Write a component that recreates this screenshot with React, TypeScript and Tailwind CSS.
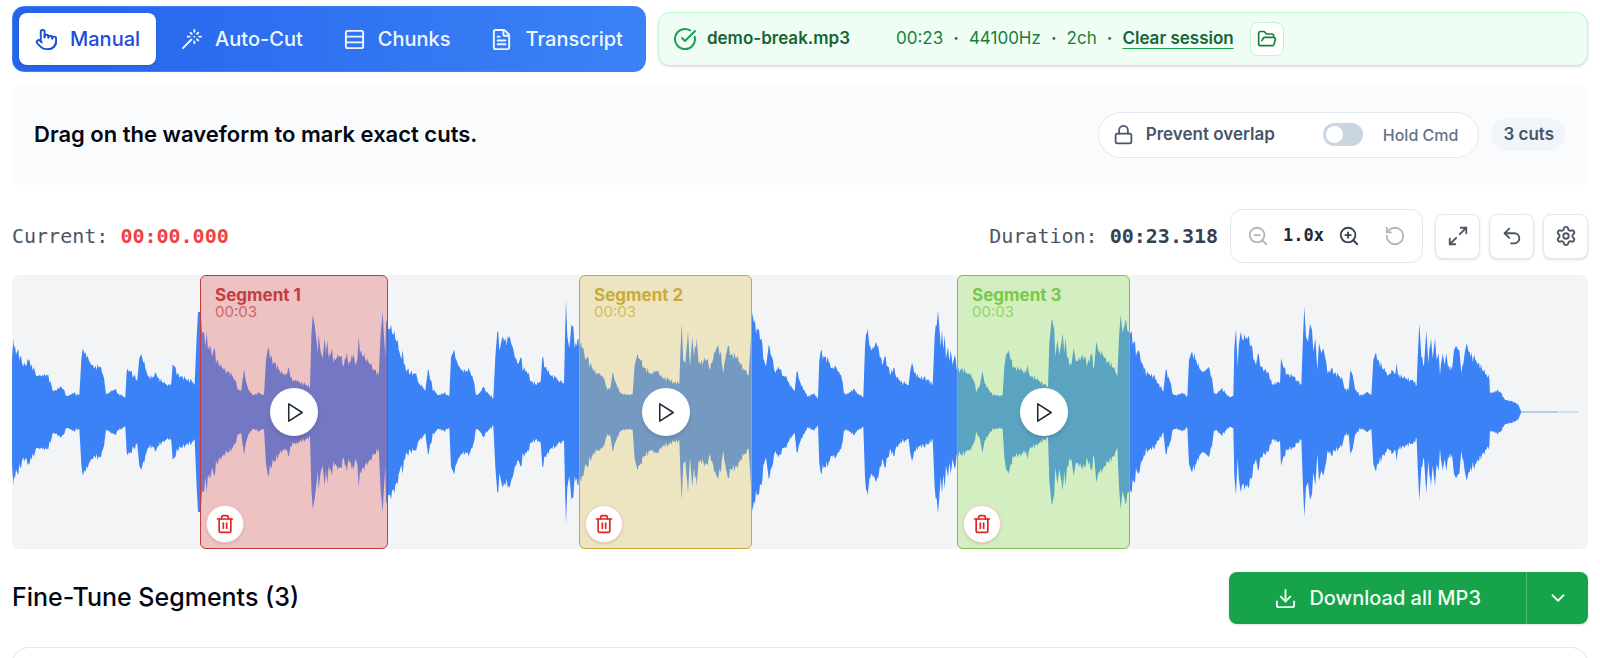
import type { ReactNode } from "react";
import {
  ChevronDown,
  CircleCheckBig,
  Download,
  FileText,
  FolderOpen,
  Lock,
  Maximize2,
  Pointer,
  RotateCcw,
  Rows3,
  Settings,
  Trash2,
  Undo2,
  Wand,
  ZoomIn,
  ZoomOut,
} from "lucide-react";

/* Waveform peaks: [offset of the block, "position,level" pairs]. Silence sits at level 426. */
const SILENCE = 426;
const PEAKS: [number, string][] = [
  [
    -36,
    "36,270 40,207 42,235 52,242 60,262 70,290 80,285 88,268 92,290 102,292 108,318 118,315 130,320 142,316 152,335 158,362 170,362 180,352 190,358 198,378 208,376 222,368 230,375 238,375 244,270 248,235 254,252 262,256 268,275 276,285 284,293 300,292 312,325 318,372 330,368 346,356 354,372 376,382 380,305 392,305 402,318 412,328 418,265 424,252 430,278 438,300 444,320 456,325 468,310 474,325 490,340 504,346 514,340 518,283 524,290 532,312 544,320 556,328 570,332 584,342 590,200 594,126 600,126 604,150 606,190 612,185 616,230 620,185 624,240 632,225 636,262 642,235 650,275 660,290 672,300 684,305 696,318 706,330 714,360 724,360 732,297 738,335 746,360 758,376 775,370 792,376 798,270 804,235 812,262 824,280 836,300 848,312 860,315 866,290 872,325 890,335 910,342 930,350 934,200 938,135 944,165 950,215 953,250 956,195 962,245 968,265 974,205 978,250 982,210 986,265 996,235 1000,280 1010,265 1022,260 1032,285 1040,248 1046,285 1060,250 1066,285 1072,270 1076,200 1080,250 1090,260 1100,275 1112,285 1124,300 1136,318 1142,190 1148,126 1152,200 1156,260 1158,150 1166,178",
  ],
  [
    1134,
    "0,178 10,195 20,215 28,245 34,268 38,240 42,285 52,300 62,308 78,310 86,340 98,352 106,362 114,297 122,330 130,362 146,376 162,368 178,378 183,262 190,245 198,268 208,290 220,308 238,300 250,330 258,376 268,370 280,352 290,368 310,384 316,260 322,183 330,235 336,205 346,205 350,225 358,198 368,230 376,265 386,280 392,262 400,300 414,308 424,335 440,345 452,335 457,262 466,290 478,312 495,325 510,335 522,342 525,200 528,90 532,200 538,235 544,165 550,170 554,235 562,210 570,230 580,235 586,270 592,262 600,285 612,305 628,310 640,325 652,360 662,350 668,305 676,335 688,365 700,375 728,372 734,285 740,262 752,272 764,295 778,310 790,312 804,300 810,320 830,328 868,342 871,250 875,160 880,270 886,280 894,183 900,290 907,200 912,260 920,205 926,280 940,275 950,270 960,300 970,265 982,230 990,245 1000,310 1008,255 1014,228 1024,255 1040,265 1052,285 1066,300 1076,315 1082,220 1087,128 1092,160 1104,180 1114,205 1122,270 1128,290 1136,225 1146,260 1156,310 1164,290",
  ],
  [
    2304,
    "0,300 8,318 18,318 30,350 44,362 50,305 58,330 70,360 84,380 100,372 114,384 118,270 122,245 134,262 146,275 156,295 168,292 180,315 188,335 192,372 206,370 220,358 234,372 250,382 255,230 263,175 268,225 276,240 286,220 294,225 300,265 308,285 314,258 324,290 332,312 340,295 350,325 370,340 386,344 391,300 396,280 404,308 416,325 432,322 444,330 458,346 464,200 474,122 478,170 482,230 486,182 490,240 494,195 498,265 504,230 508,275 512,240 518,285 524,255 532,300 544,298 558,308 570,315 582,335 590,365 600,345 607,302 614,340 626,360 640,376 668,376 673,290 678,255 686,240 692,270 704,295 720,300 738,310 742,285 748,315 770,330 804,348 808,220 814,155 822,160 826,260 832,210 838,255 848,190 853,250 856,205 862,265 874,285 881,235 888,275 904,260 914,260 922,285 934,250 942,295 949,215 956,245 968,255 984,275 1000,295 1012,320 1017,200 1022,135 1028,190 1036,150 1046,185 1052,190 1062,215 1070,250 1076,240 1086,280 1100,312 1120,318 1134,340 1150,365 1157,300 1166,320",
  ],
  [
    3474,
    "0,335 8,372 20,378 36,368 52,378 57,270 64,248 76,268 88,295 98,305 108,300 116,290 126,325 132,372 144,368 154,355 166,370 178,382 190,378 193,230 198,178 203,290 206,230 210,200 220,212 234,200 244,225 252,268 258,285 264,250 274,292 284,300 294,305 306,345 324,335 330,340 333,265 342,295 354,315 372,322 394,342 399,200 403,110 408,200 414,215 420,162 426,180 430,245 436,205 442,300 447,220 454,250 460,235 466,265 474,310 484,295 494,310 506,318 518,330 524,358 536,360 541,300 548,315 556,360 572,376 590,368 604,374 610,270 615,255 624,272 640,300 656,315 668,302 676,312 680,280 684,315 700,325 726,330 740,344 744,240 748,160 754,260 762,285 769,182 775,280 783,205 788,265 795,205 800,270 806,250 810,315 818,250 824,285 829,250 834,290 846,300 852,240 858,228 868,240 874,310 884,250 890,220 896,245 910,265 924,280 940,305 958,325 960,372 980,362 992,368 1006,390 1024,393 1044,403 1054,424",
  ],
];

function buildWaveform(): string {
  const peaks = PEAKS.flatMap(([offset, pairs]) =>
    pairs.split(" ").map((pair) => {
      const [position, level] = pair.split(",").map(Number);
      return [offset + position, SILENCE - level];
    }),
  );
  const outline: number[][] = [];
  peaks.forEach(([x, height], i) => {
    outline.push([x, height]);
    const next = peaks[i + 1];
    if (!next || next[0] - x < 8) return;
    let flip = 1;
    for (let step = x + 3; step < next[0] - 1; step += 3) {
      const along = (step - x) / (next[0] - x);
      const ripple = (flip * ((step * 7) % 5) * height) / 50;
      outline.push([step, height + (next[1] - height) * along + ripple]);
      flip = -flip;
    }
  });
  const top = outline.map(([x, h]) => `${x} ${(411 - h).toFixed(1)}`);
  const bottom = outline.map(([x, h]) => `${x} ${(411 + h).toFixed(1)}`).reverse();
  return `M${top.join("L")}L${bottom.join("L")}Z`;
}

const WAVEFORM = buildWaveform();
const TRACK_UNITS = 1576;

const segments = [
  {
    name: "Segment 1",
    start: 188,
    length: 188,
    box: "border-[#c53b3f] bg-[#df6564]/35",
    text: "text-[#c53b3f]",
  },
  {
    name: "Segment 2",
    start: 567,
    length: 173,
    box: "border-[#c6a83a] bg-[#e2c95e]/35",
    text: "text-[#c9ab37]",
  },
  {
    name: "Segment 3",
    start: 945,
    length: 173,
    box: "border-[#78c04a] bg-[#97e65e]/35",
    text: "text-[#78c946]",
  },
];

const tabs = [
  { label: "Manual", Icon: Pointer },
  { label: "Auto-Cut", Icon: Wand },
  { label: "Chunks", Icon: Rows3 },
  { label: "Transcript", Icon: FileText },
];

function ToolButton({ label, children }: { label: string; children: ReactNode }) {
  return (
    <button
      type="button"
      aria-label={label}
      className="flex size-[45px] items-center justify-center rounded-lg border border-[#e5e7eb] bg-white text-[#4b5563] shadow-sm"
    >
      {children}
    </button>
  );
}

function Header() {
  return (
    <header className="flex items-center gap-3">
      <div
        role="tablist"
        className="flex gap-2 rounded-xl border border-[#3b82f6] bg-[linear-gradient(to_right,#2563eb,#3b82f6)] p-[6px]"
      >
        {tabs.map(({ label, Icon }, i) => (
          <button
            key={label}
            type="button"
            role="tab"
            aria-selected={i === 0}
            className={
              i === 0
                ? "flex h-[52px] items-center gap-3 rounded-lg bg-white px-4 text-xl font-medium text-[#1d4ed8] shadow-sm"
                : "flex h-[52px] items-center gap-3 rounded-lg px-4 text-xl font-medium text-[#eff6ff]"
            }
          >
            <Icon size={23} strokeWidth={2} />
            {label}
          </button>
        ))}
      </div>
      <div className="flex h-[54px] flex-1 items-center rounded-xl border border-[#bbf7d0] bg-[#f0fdf4] px-[14px] text-[17px] text-[#15803d] shadow-sm">
        <CircleCheckBig size={24} className="text-[#16a34a]" />
        <span className="ml-[10px] font-semibold text-[#166534]">demo-break.mp3</span>
        <span className="ml-[46px] flex items-center gap-[10px]">
          <span>00:23</span>
          <span className="font-bold">·</span>
          <span>44100Hz</span>
          <span className="font-bold">·</span>
          <span>2ch</span>
          <span className="font-bold">·</span>
          <button
            type="button"
            className="font-semibold text-[#166534] underline decoration-[#16a34a] underline-offset-4"
          >
            Clear session
          </button>
        </span>
        <button
          type="button"
          aria-label="Open file"
          className="ml-4 flex size-[34px] items-center justify-center rounded-lg border border-[#bbf7d0] bg-white text-[#15803d]"
        >
          <FolderOpen size={20} />
        </button>
      </div>
    </header>
  );
}

function HintPanel() {
  return (
    <section className="mt-3 flex h-[101px] items-center justify-between rounded-xl bg-[#fafbfd] px-[22px]">
      <h2 className="text-[22px] font-semibold text-[#030712]">
        Drag on the waveform to mark exact cuts.
      </h2>
      <div className="flex items-center gap-3">
        <div className="flex h-[46px] items-center rounded-full border border-[#e2e8f0] bg-white pr-5 pl-[14px]">
          <label htmlFor="overlap" className="flex items-center gap-3 text-[17px] font-semibold text-[#475569]">
            <Lock size={21} />
            Prevent overlap
          </label>
          <input
            id="overlap"
            type="checkbox"
            role="switch"
            className="ml-12 h-[23px] w-10 appearance-none rounded-full bg-[#cbd5e1] p-[3px] before:block before:size-[17px] before:rounded-full before:bg-white checked:bg-[#2563eb] checked:before:ml-[17px]"
          />
          <span className="ml-5 text-base font-medium text-[#64748b]">Hold Cmd</span>
        </div>
        <span className="rounded-full bg-[#f1f5f9] px-3 py-1 text-[17px] font-semibold text-[#475569]">
          3 cuts
        </span>
      </div>
    </section>
  );
}

function Transport() {
  return (
    <div className="mt-6 flex items-center justify-between font-['DejaVu_Sans_Mono',monospace] text-xl text-[#4b5563]">
      <div>
        Current: <span className="font-bold text-[#ef4444]">00:00.000</span>
      </div>
      <div className="flex items-center gap-3">
        <div>
          Duration: <span className="font-bold text-[#374151]">00:23.318</span>
        </div>
        <div className="flex h-[54px] items-center rounded-xl border border-[#e5e7eb] bg-white px-4">
          <button type="button" aria-label="Zoom out" disabled className="text-[#b4b6ba]">
            <ZoomOut size={22} />
          </button>
          <span className="mx-[14px] text-[17px] font-bold text-[#1f2937]">1.0x</span>
          <button type="button" aria-label="Zoom in" className="text-[#374151]">
            <ZoomIn size={22} />
          </button>
          <button type="button" aria-label="Reset zoom" disabled className="ml-6 text-[#b4b6ba]">
            <RotateCcw size={22} />
          </button>
        </div>
        <div className="flex gap-[9px]">
          <ToolButton label="Expand">
            <Maximize2 size={22} />
          </ToolButton>
          <ToolButton label="Undo">
            <Undo2 size={22} />
          </ToolButton>
          <ToolButton label="Settings">
            <Settings size={22} />
          </ToolButton>
        </div>
      </div>
    </div>
  );
}

function Waveform() {
  return (
    <section className="relative mt-3 h-[274px] rounded-md bg-[#f3f4f6]">
      <svg
        viewBox="0 0 4728 822"
        preserveAspectRatio="none"
        className="block size-full"
        aria-hidden="true"
      >
        <path d={WAVEFORM} fill="#3b82f6" />
        <rect x="4526" y="409" width="110" height="4" fill="#93b8e8" />
        <rect x="4636" y="409" width="64" height="4" fill="#c3d4ec" />
      </svg>
      {segments.map((segment) => (
        <div
          key={segment.name}
          className={`absolute inset-y-0 rounded-md border ${segment.box}`}
          style={{
            left: `${(segment.start / TRACK_UNITS) * 100}%`,
            width: `${(segment.length / TRACK_UNITS) * 100}%`,
          }}
        >
          <div className={`absolute top-[10px] left-[14px] ${segment.text}`}>
            <div className="text-[17px] leading-[18px] font-bold">{segment.name}</div>
            <div className="text-[15px] leading-4 opacity-70">00:03</div>
          </div>
          <button
            type="button"
            aria-label={`Play ${segment.name}`}
            className="absolute top-1/2 left-1/2 flex size-12 -translate-1/2 items-center justify-center rounded-full bg-white text-[#1f2937] shadow-md"
          >
            <svg
              viewBox="0 0 24 24"
              className="size-[23px]"
              fill="none"
              stroke="currentColor"
              strokeWidth="1.6"
              strokeLinejoin="round"
            >
              <path d="M6 3l14 9-14 9z" />
            </svg>
          </button>
          <button
            type="button"
            aria-label={`Delete ${segment.name}`}
            className="absolute bottom-[5px] left-[5px] flex size-[38px] items-center justify-center rounded-full border border-[#fecaca] bg-white text-[#dc2626] shadow-sm"
          >
            <Trash2 size={20} />
          </button>
        </div>
      ))}
    </section>
  );
}

export default function App() {
  return (
    <main className="h-screen overflow-hidden bg-white px-3 pt-[6px] font-['Inter',sans-serif]">
      <Header />
      <HintPanel />
      <Transport />
      <Waveform />
      <div className="mt-[23px] flex items-center justify-between">
        <h2 className="text-[25px] font-medium text-[#030712]">Fine-Tune Segments (3)</h2>
        <div className="flex h-[52px] overflow-hidden rounded-lg bg-[#16a34a] text-xl font-medium text-[#f0fdf4] shadow-sm">
          <button type="button" className="flex items-center gap-3 px-[45px]">
            <Download size={23} />
            Download all MP3
          </button>
          <button
            type="button"
            aria-label="Download options"
            className="flex w-[62px] items-center justify-center border-l border-[#4cbf73]"
          >
            <ChevronDown size={22} />
          </button>
        </div>
      </div>
      <section className="mt-[23px] h-24 rounded-2xl border border-[#e5e7eb] bg-white" />
    </main>
  );
}
